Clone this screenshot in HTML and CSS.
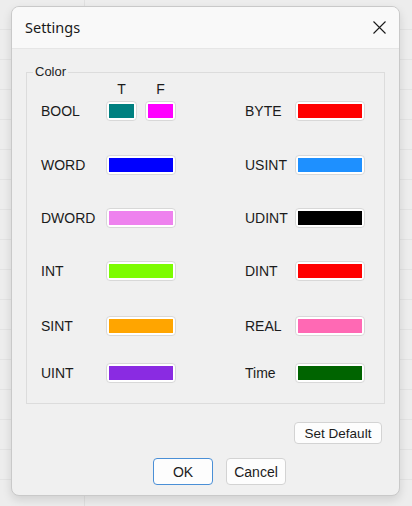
FILE: index.html
```html
<!DOCTYPE html>
<html lang="en">
<head>
  <meta charset="UTF-8">
  <title>Settings</title>
  <link rel="stylesheet" href="styles.css">
</head>
<body>

  <div class="dialog">
    <div class="title-bar">
      <span class="title">Settings</span>
      <span class="close">
        <svg width="13" height="13" viewBox="0 0 13 13"><path d="M0.5 0.5L12.5 12.5M12.5 0.5L0.5 12.5" stroke="#1a1a1a" stroke-width="1.1" fill="none"/></svg>
      </span>
    </div>

    <div class="dialog-body">
      <fieldset class="group">
        <legend>Color</legend>

        <div class="tf-head">
          <span>T</span>
          <span>F</span>
        </div>

        <div class="colors">
          <div class="label">BOOL</div>
          <div class="pair">
            <span class="swatch small"><span class="fill teal"></span></span>
            <span class="swatch small"><span class="fill magenta"></span></span>
          </div>
          <div></div>
          <div class="label">BYTE</div>
          <span class="swatch"><span class="fill red"></span></span>

          <div class="label">WORD</div>
          <span class="swatch"><span class="fill blue"></span></span>
          <div></div>
          <div class="label">USINT</div>
          <span class="swatch"><span class="fill dodger"></span></span>

          <div class="label">DWORD</div>
          <span class="swatch"><span class="fill violet"></span></span>
          <div></div>
          <div class="label">UDINT</div>
          <span class="swatch"><span class="fill black"></span></span>

          <div class="label">INT</div>
          <span class="swatch"><span class="fill lawn"></span></span>
          <div></div>
          <div class="label">DINT</div>
          <span class="swatch"><span class="fill red"></span></span>

          <div class="label">SINT</div>
          <span class="swatch"><span class="fill orange"></span></span>
          <div></div>
          <div class="label">REAL</div>
          <span class="swatch"><span class="fill pink"></span></span>

          <div class="label">UINT</div>
          <span class="swatch"><span class="fill purple"></span></span>
          <div></div>
          <div class="label">Time</div>
          <span class="swatch"><span class="fill green"></span></span>
        </div>
      </fieldset>

      <div class="default-row">
        <button class="btn default-btn">Set Default</button>
      </div>

      <div class="button-row">
        <button class="btn ok-btn">OK</button>
        <button class="btn">Cancel</button>
      </div>
    </div>
  </div>

</body>
</html>
```

FILE: styles.css
```css
body {
  margin: 0;
  height: 506px;
  overflow: hidden;
  font-family: 'Liberation Sans', Arial, sans-serif;
  color: #1b1b1b;
  background-color: #ededed;
  background-image:
    linear-gradient(to right, transparent 84px, #e0e0e0 84px, #e0e0e0 85px, transparent 85px),
    repeating-linear-gradient(to bottom, transparent 0, transparent 29px, #e3e3e3 29px, #e3e3e3 30px);
}

.dialog {
  margin: 6px 0 0 11px;
  width: 389px;
  height: 490px;
  box-sizing: border-box;
  border: 1px solid #c9c9c9;
  border-radius: 8px;
  background-color: #f0f0f0;
  box-shadow: 0 4px 10px rgba(0,0,0,0.12);
  overflow: hidden;
  display: flex;
  flex-direction: column;
}

.title-bar {
  height: 41px;
  border-bottom: 1px solid #e6e6e6;
  background-color: #f9f9f9;
  display: flex;
  align-items: center;
  justify-content: space-between;
  padding: 0 13px 0 13px;
}

.title {
  font-family: 'Noto Sans', sans-serif;
  font-size: 14.5px;
  color: #1a1a1a;
  margin-top: -2px;
}

.close {
  display: flex;
  margin-top: -1px;
}

.dialog-body {
  padding-top: 15px;
}

.group {
  margin: 0 14px;
  padding: 0 0 20px 14px;
  border: 1px solid #dcdcdc;
  min-width: 0;
}

.group legend {
  margin-left: -8px;
  padding: 0 2px;
  font-size: 13px;
  line-height: 16px;
  color: #222;
}

.tf-head {
  display: flex;
  gap: 8px;
  margin-left: 65px;
  height: 16px;
  line-height: 16px;
  padding-top: 1px;
  font-size: 14px;
}

.tf-head span {
  width: 31px;
  text-align: center;
}

.colors {
  margin-top: 4px;
  display: grid;
  grid-template-columns: 65px 70px 69px 50px 70px;
  grid-template-rows: 54px 53px 53px 55px 47px 20px;
  align-items: start;
}

.label {
  font-size: 14px;
  line-height: 20px;
}

.pair {
  display: flex;
  gap: 8px;
}

.swatch {
  display: block;
  width: 70px;
  height: 20px;
  box-sizing: border-box;
  border: 1px solid #d8d8d8;
  border-radius: 4px;
  background-color: #fff;
  padding: 2px;
}

.swatch.small {
  width: 31px;
}

.fill {
  display: block;
  height: 100%;
}

.teal { background-color: #008080; }
.magenta { background-color: #ff00ff; }
.red { background-color: #ff0000; }
.blue { background-color: #0000ff; }
.dodger { background-color: #1e90ff; }
.violet { background-color: #ee82ee; }
.black { background-color: #000; }
.lawn { background-color: #7cfc00; }
.orange { background-color: #ffa500; }
.pink { background-color: #ff69b4; }
.purple { background-color: #8a2be2; }
.green { background-color: #006400; }

.btn {
  font-family: 'Liberation Sans', Arial, sans-serif;
  font-size: 14px;
  color: #1b1b1b;
  background-color: #fdfdfd;
  border: 1px solid #d3d3d3;
  border-radius: 4px;
  padding: 0;
  cursor: pointer;
}

.default-row {
  display: flex;
  justify-content: flex-end;
  padding-right: 17px;
  margin-top: 18px;
}

.default-btn {
  width: 88px;
  height: 22px;
  font-size: 13.5px;
}

.button-row {
  display: flex;
  gap: 13px;
  margin: 14px 0 0 141px;
}

.button-row .btn {
  width: 60px;
  height: 27px;
}

.button-row .ok-btn {
  border: 1.5px solid #4a8fd6;
}
```
